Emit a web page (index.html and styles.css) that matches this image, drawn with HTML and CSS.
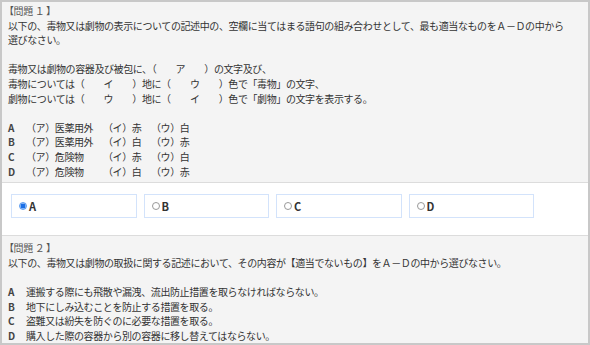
FILE: index.html
```html
<!DOCTYPE html>
<html lang="ja">
<head>
    <meta charset="UTF-8">
    <meta name="viewport" content="width=device-width, initial-scale=1.0">
    <title>問題</title>
    <link rel="stylesheet" href="styles.css">
</head>
<body>
    <div class="frame">
        <!-- Question 1 -->
        <section class="question">
            <p class="q-title">【問題 １ 】</p>
            <p class="gap">以下の、毒物又は劇物の表示についての記述中の、空欄に当てはまる語句の組み合わせとして、最も適当なものをＡ－Ｄの中から<br>選びなさい。</p>
            <p class="gap">毒物又は劇物の容器及び被包に、（　　ア　　）の文字及び、<br>毒物については（　　イ　　）地に（　　ウ　　）色で「毒物」の文字、<br>劇物については（　　ウ　　）地に（　　イ　　）色で「劇物」の文字を表示する。</p>
            <ul class="combo">
                <li><span class="key">A</span><span class="c1">（ア）医薬用外</span><span class="c2">（イ）赤</span><span>（ウ）白</span></li>
                <li><span class="key">B</span><span class="c1">（ア）医薬用外</span><span class="c2">（イ）白</span><span>（ウ）赤</span></li>
                <li><span class="key">C</span><span class="c1">（ア）危険物</span><span class="c2">（イ）赤</span><span>（ウ）白</span></li>
                <li><span class="key">D</span><span class="c1">（ア）危険物</span><span class="c2">（イ）白</span><span>（ウ）赤</span></li>
            </ul>
        </section>

        <!-- Answer buttons -->
        <div class="answers">
            <label class="answer"><input type="radio" name="q1" checked><span>A</span></label>
            <label class="answer"><input type="radio" name="q1"><span>B</span></label>
            <label class="answer"><input type="radio" name="q1"><span>C</span></label>
            <label class="answer"><input type="radio" name="q1"><span>D</span></label>
        </div>

        <!-- Question 2 -->
        <section class="question second">
            <p class="q-title">【問題 ２ 】</p>
            <p class="gap">以下の、毒物又は劇物の取扱に関する記述において、その内容が【適当でないもの】をＡ－Ｄの中から選びなさい。</p>
            <ul class="stmts">
                <li><span class="key">A</span><span>運搬する際にも飛散や漏洩、流出防止措置を取らなければならない。</span></li>
                <li><span class="key">B</span><span>地下にしみ込むことを防止する措置を取る。</span></li>
                <li><span class="key">C</span><span>盗難又は紛失を防ぐのに必要な措置を取る。</span></li>
                <li><span class="key">D</span><span>購入した際の容器から別の容器に移し替えてはならない。</span></li>
            </ul>
        </section>
    </div>
</body>
</html>
```

FILE: styles.css
```css
* {
    margin: 0;
    padding: 0;
    box-sizing: border-box;
}

body {
    font-family: 'Noto Sans CJK JP', 'Noto Sans', sans-serif;
    font-size: 10px;
    letter-spacing: -0.4px;
    line-height: 14.6px;
    color: #333;
    background: #fff;
}

.frame {
    height: 345px;
    border: 2px solid #c8c8c8;
    overflow: hidden;
}

.question {
    background: #f4f4f4;
    padding: 2px 6px 3px 6px;
    border-bottom: 1px solid #dcdcdc;
}

.question.second {
    padding-top: 5px;
    border-bottom: none;
}

.q-title {
    color: #555;
    margin-left: -4px;
}

.gap {
    margin-bottom: 14.6px;
}

ul {
    list-style: none;
}

.combo li,
.stmts li {
    display: flex;
}

.key {
    width: 18px;
    font-weight: bold;
    color: #444;
}

.combo .c1 {
    width: 77px;
}

.combo .c2 {
    width: 48px;
}

/* answer row */
.answers {
    display: flex;
    gap: 7px;
    padding: 11px 9px 17px;
    background: #fff;
    border-bottom: 1px solid #dcdcdc;
}

.answer {
    display: flex;
    align-items: center;
    width: 125.5px;
    height: 24px;
    padding-left: 7px;
    border: 1px solid #d3e3fb;
    font-weight: bold;
    font-size: 11px;
    color: #333;
    cursor: pointer;
}

.answer input {
    appearance: none;
    width: 8px;
    height: 8px;
    margin-right: 2px;
    border: 1px solid #999;
    border-radius: 50%;
    background: #fff;
}

.answer input:checked {
    border-color: #5b9cf0;
    background: radial-gradient(circle, #1a6fe6 55%, #8cb8f4 60%);
}
```
